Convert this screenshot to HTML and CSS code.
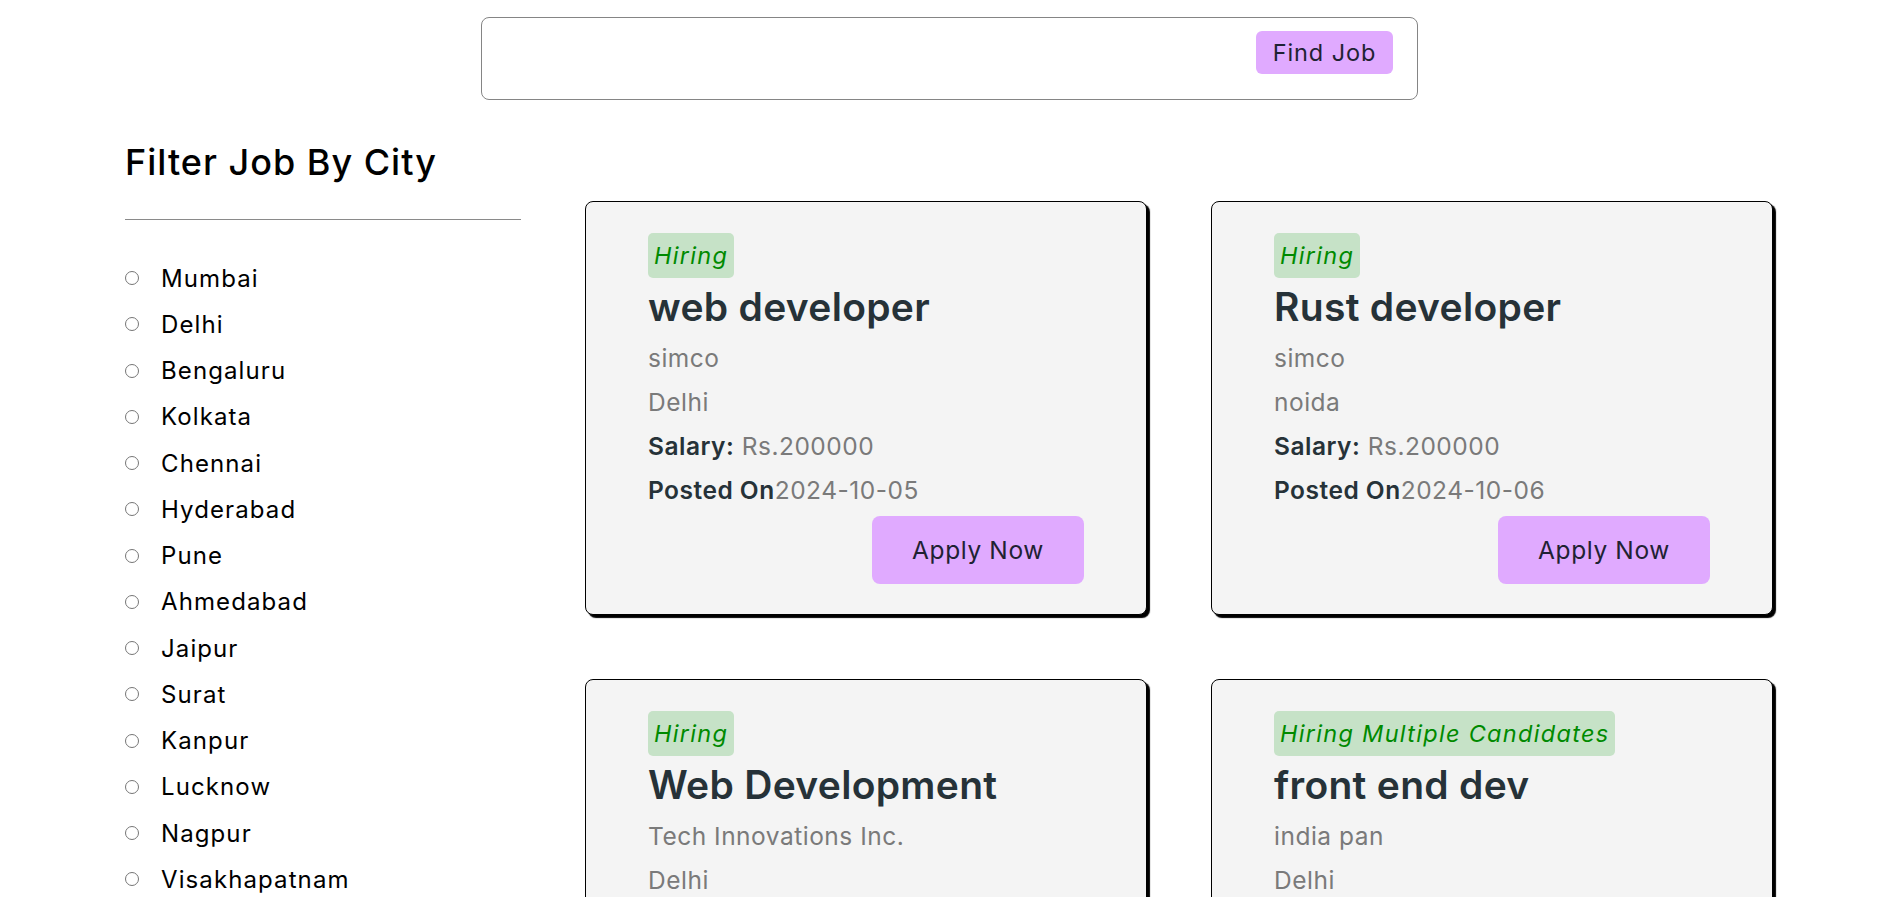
FILE: index.html
```html
<!DOCTYPE html>
<html lang="en">
<head>
<meta charset="utf-8">
<title>Jobs</title>
<link rel="stylesheet" href="styles.css">
</head>
<body>
<header class="search-wrap">
  <form class="search-box">
    <input class="search-input" type="text" aria-label="Search jobs">
    <button class="find-btn" type="button">Find Job</button>
  </form>
</header>
<main class="page">
  <aside class="sidebar">
    <h2 class="filter-title">Filter Job By City</h2>
    <hr class="divider">
    <ul class="city-list">
      <li class="city"><input type="radio" name="city" class="radio"><span>Mumbai</span></li>
      <li class="city"><input type="radio" name="city" class="radio"><span>Delhi</span></li>
      <li class="city"><input type="radio" name="city" class="radio"><span>Bengaluru</span></li>
      <li class="city"><input type="radio" name="city" class="radio"><span>Kolkata</span></li>
      <li class="city"><input type="radio" name="city" class="radio"><span>Chennai</span></li>
      <li class="city"><input type="radio" name="city" class="radio"><span>Hyderabad</span></li>
      <li class="city"><input type="radio" name="city" class="radio"><span>Pune</span></li>
      <li class="city"><input type="radio" name="city" class="radio"><span>Ahmedabad</span></li>
      <li class="city"><input type="radio" name="city" class="radio"><span>Jaipur</span></li>
      <li class="city"><input type="radio" name="city" class="radio"><span>Surat</span></li>
      <li class="city"><input type="radio" name="city" class="radio"><span>Kanpur</span></li>
      <li class="city"><input type="radio" name="city" class="radio"><span>Lucknow</span></li>
      <li class="city"><input type="radio" name="city" class="radio"><span>Nagpur</span></li>
      <li class="city"><input type="radio" name="city" class="radio"><span>Visakhapatnam</span></li>
      <li class="city"><input type="radio" name="city" class="radio"><span>Indore</span></li>
      <li class="city"><input type="radio" name="city" class="radio"><span>Thane</span></li>
    </ul>
  </aside>
  <section class="jobs">
    <article class="card">
      <div><span class="badge">Hiring</span></div>
      <h3 class="job-title">web developer</h3>
      <p class="info">simco</p>
      <p class="info">Delhi</p>
      <p class="info"><b class="label">Salary:</b> Rs.200000</p>
      <p class="info"><b class="label">Posted On</b>2024-10-05</p>
      <div class="actions"><button class="apply-btn" type="button">Apply Now</button></div>
    </article>
    <article class="card">
      <div><span class="badge">Hiring</span></div>
      <h3 class="job-title">Rust developer</h3>
      <p class="info">simco</p>
      <p class="info">noida</p>
      <p class="info"><b class="label">Salary:</b> Rs.200000</p>
      <p class="info"><b class="label">Posted On</b>2024-10-06</p>
      <div class="actions"><button class="apply-btn" type="button">Apply Now</button></div>
    </article>
    <article class="card">
      <div><span class="badge">Hiring</span></div>
      <h3 class="job-title">Web Development</h3>
      <p class="info">Tech Innovations Inc.</p>
      <p class="info">Delhi</p>
      <p class="info"><b class="label">Salary:</b> Rs.600000</p>
      <p class="info"><b class="label">Posted On</b>2024-10-07</p>
      <div class="actions"><button class="apply-btn" type="button">Apply Now</button></div>
    </article>
    <article class="card">
      <div><span class="badge">Hiring Multiple Candidates</span></div>
      <h3 class="job-title">front end dev</h3>
      <p class="info">india pan</p>
      <p class="info">Delhi</p>
      <p class="info"><b class="label">Salary:</b> Rs.300000</p>
      <p class="info"><b class="label">Posted On</b>2024-10-08</p>
      <div class="actions"><button class="apply-btn" type="button">Apply Now</button></div>
    </article>
  </section>
</main>
</body>
</html>
```
FILE: styles.css
```css
* { box-sizing: border-box; }

body {
  margin: 8px;
  font-family: Inter, "Noto Sans", sans-serif;
  color: #000;
  background: #fff;
}

.search-wrap {
  display: flex;
  justify-content: center;
  padding-top: 9px;
  padding-left: 7px;
}

.search-box {
  width: 937px;
  height: 83px;
  border: 1px solid #858585;
  border-radius: 8px;
  display: flex;
  align-items: flex-start;
  padding: 13px 24px 0 12px;
  margin: 0;
}

.search-input {
  flex: 1;
  border: none;
  outline: none;
  background: transparent;
  height: 43px;
  font: inherit;
}

.find-btn {
  width: 137px;
  height: 43px;
  border: none;
  border-radius: 6px;
  background: #e0aaff;
  color: #1f2233;
  font-family: Inter, sans-serif;
  font-size: 23.5px;
  letter-spacing: 0.9px;
  padding: 0;
}

.page {
  display: flex;
  gap: 64px;
  padding-left: 117px;
  margin-top: 40px;
}

.sidebar {
  width: 396px;
  flex: none;
}

.filter-title {
  margin: 0;
  font-size: 36px;
  font-weight: 500;
  line-height: 44px;
  letter-spacing: 1px;
  padding-left: 0;
}

.divider {
  margin: 35px 0 0;
  border: none;
  border-top: 1px solid #8a8a8a;
  height: 0;
}

.city-list {
  list-style: none;
  margin: 35px 0 0;
  padding: 0;
}

.city {
  display: flex;
  align-items: center;
  height: 46.25px;
  font-size: 24px;
  letter-spacing: 1.1px;
}

.radio {
  margin: 0 22px 0 0;
  width: 14px;
  height: 14px;
  flex: none;
}

.jobs {
  display: grid;
  grid-template-columns: 562px 562px;
  column-gap: 64px;
  row-gap: 64px;
  padding-top: 61px;
  align-content: start;
}

.card {
  background: #f4f4f4;
  border: 1px solid #000;
  border-radius: 8px;
  box-shadow: 3px 3px 1px #000;
  padding: 31px 62px 30px;
}

.badge {
  display: inline-block;
  background: #c6e2c7;
  color: #008a00;
  font-style: italic;
  font-size: 23.5px;
  line-height: 35px;
  letter-spacing: 1.3px;
  padding: 5px 6px;
  border-radius: 5px;
}

.job-title {
  margin: 5px 0 9px;
  font-size: 39px;
  line-height: 48px;
  font-weight: 600;
  color: #263238;
  letter-spacing: 0.3px;
}

.info {
  margin: 0 0 8px;
  font-size: 24.5px;
  line-height: 36px;
  color: #7a7a7a;
  letter-spacing: 0.5px;
}

.label {
  color: #263238;
  font-weight: 600;
}

.actions {
  display: flex;
  justify-content: flex-end;
  margin-top: 6px;
}

.apply-btn {
  width: 212px;
  height: 68px;
  border: none;
  border-radius: 8px;
  background: #e0aaff;
  color: #1f2233;
  font-family: Inter, sans-serif;
  font-size: 24.5px;
  letter-spacing: 0.6px;
  padding: 0;
}
```
